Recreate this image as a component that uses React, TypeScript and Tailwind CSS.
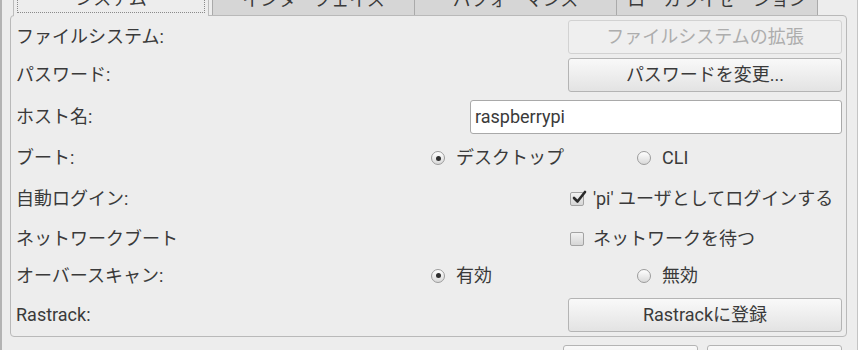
import React from "react";

function Btn({ children, disabled }: { children: React.ReactNode; disabled?: boolean }) {
  return (
    <div
      className={
        "w-[274px] h-[34px] rounded-[3px] border flex items-center justify-center " +
        (disabled
          ? "border-[#d2d2d2] bg-[#efefef] text-[#adadad]"
          : "border-[#b4b4b4] bg-linear-to-b from-[#f9f9f9] to-[#e3e3e3] text-[#3a3a3a]")
      }
    >
      {children}
    </div>
  );
}

function Radio({ checked, label }: { checked?: boolean; label: string }) {
  return (
    <div className="flex items-center gap-[11px] pl-[1px]">
      <span className="w-[14px] h-[14px] rounded-full border border-[#9c9c9c] bg-linear-to-b from-white to-[#d9d9d9] flex items-center justify-center">
        {checked && <span className="w-[5px] h-[5px] rounded-full bg-[#2e2e2e]" />}
      </span>
      <span>{label}</span>
    </div>
  );
}

function Check({ checked, label }: { checked?: boolean; label: string }) {
  return (
    <div className="flex items-center gap-[9px] pl-[2px]">
      <span className="relative w-[14px] h-[14px] rounded-[2px] border border-[#a3a3a3] bg-linear-to-b from-[#f2f2f2] to-[#d6d6d6]">
        {checked && (
          <svg className="absolute -top-[3px] left-[1px]" width="15" height="15" viewBox="0 0 15 15">
            <path d="M2 8 L5.5 11.5 L13 2" fill="none" stroke="#2a2a2a" strokeWidth="2.6" strokeLinecap="round" strokeLinejoin="round" />
          </svg>
        )}
      </span>
      <span>{label}</span>
    </div>
  );
}

export default function App() {
  return (
    <div className="w-[858px] h-[350px] overflow-hidden bg-[#ededed] border-l-2 border-l-[#b3b3b3] border-r border-r-[#c4c4c4] text-[#3a3a3a] text-[18px] leading-none font-[Roboto,'Noto_Sans_CJK_JP',sans-serif]">
      {/* tabs */}
      <div className="-mt-[16px] ml-[11px] flex items-end h-[31px]">
        <div className="relative z-10 w-[196px] h-[32px] -mb-px bg-[#ededed] border-x border-t border-[#bcbcbc] px-[3px] pb-[3px]">
          <div className="h-full border border-dotted border-[#8a8a8a] flex items-center justify-center">
            システム
          </div>
        </div>
        <div className="ml-[3px] flex h-full">
          <div className="w-[202px] h-full bg-[#d6d6d6] border-l border-t border-[#aaaaaa] flex items-center justify-center">
            インターフェイス
          </div>
          <div className="w-[202px] h-full bg-[#d6d6d6] border-l border-t border-[#aaaaaa] flex items-center justify-center">
            パフォーマンス
          </div>
          <div className="w-[202px] h-full bg-[#d6d6d6] border-x border-t border-[#aaaaaa] flex items-center justify-center">
            ローカライゼーション
          </div>
        </div>
      </div>

      {/* panel */}
      <div className="ml-[8px] w-[837px] h-[322px] border border-[#b9b9b9] rounded-[4px] pl-[5px] pr-[4px] flex flex-col">
        <div className="h-[42px] flex items-center">
          <span className="flex-1">ファイルシステム:</span>
          <Btn disabled>ファイルシステムの拡張</Btn>
        </div>
        <div className="h-[34px] flex items-center">
          <span className="flex-1">パスワード:</span>
          <Btn>パスワードを変更...</Btn>
        </div>
        <div className="h-[50px] flex items-center">
          <span className="flex-1">ホスト名:</span>
          <div className="w-[372px] h-[34px] rounded-[3px] border border-[#a9a9a9] bg-white pl-[4px] flex items-center">
            raspberrypi
          </div>
        </div>
        <div className="h-[32px] flex items-center">
          <span className="flex-1">ブート:</span>
          <div className="w-[412px] grid grid-cols-2">
            <Radio checked label="デスクトップ" />
            <Radio label="CLI" />
          </div>
        </div>
        <div className="h-[50px] flex items-center">
          <span className="flex-1">自動ログイン:</span>
          <div className="w-[274px]">
            <Check checked label="'pi' ユーザとしてログインする" />
          </div>
        </div>
        <div className="h-[30px] flex items-center">
          <span className="flex-1">ネットワークブート</span>
          <div className="w-[274px]">
            <Check label="ネットワークを待つ" />
          </div>
        </div>
        <div className="h-[43px] flex items-center">
          <span className="flex-1">オーバースキャン:</span>
          <div className="w-[412px] grid grid-cols-2">
            <Radio checked label="有効" />
            <Radio label="無効" />
          </div>
        </div>
        <div className="h-[36px] flex items-center">
          <span className="flex-1">Rastrack:</span>
          <Btn>Rastrackに登録</Btn>
        </div>
      </div>

      {/* dialog buttons, cut off */}
      <div className="mt-[8px] ml-[561px] flex gap-[9px]">
        <div className="w-[135px] h-[30px] rounded-[3px] border border-[#b4b4b4] bg-linear-to-b from-[#f9f9f9] to-[#e3e3e3]" />
        <div className="w-[135px] h-[30px] rounded-[3px] border border-[#b4b4b4] bg-linear-to-b from-[#f9f9f9] to-[#e3e3e3]" />
      </div>
    </div>
  );
}
